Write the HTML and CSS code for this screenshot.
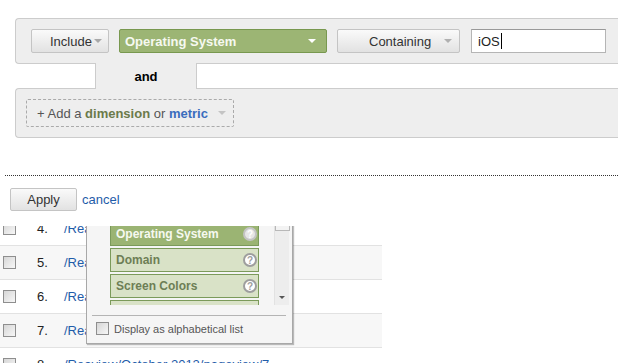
FILE: index.html
```html
<!doctype html>
<html lang="en">
    <head>
        <meta charset="UTF-8">
        <title>Advanced segment</title>
        <link rel="stylesheet" href="styles.css">
    </head>
    <body>
        <div class="filter">
            <div class="panel panel--condition">
                <div class="btn btn--include">Include<span class="arrow"></span></div>
                <div class="select">Operating System<span class="arrow arrow--white"></span></div>
                <div class="btn btn--match">Containing<span class="arrow arrow--grey"></span></div>
                <div class="field">iOS<span class="caret"></span></div>
            </div>
            <div class="joiner">and</div>
            <div class="panel panel--add">
                <div class="add-dim">
                    + Add a&nbsp;<b class="add-dim__dim">dimension</b>&nbsp;or&nbsp;<b class="add-dim__metric">metric</b>
                    <span class="arrow arrow--light"></span>
                </div>
            </div>
        </div>

        <div class="rule"></div>

        <div class="actions">
            <button class="btn btn--apply">Apply</button>
            <a class="cancel">cancel</a>
        </div>

        <div class="results">
            <div class="rows">
                <div class="row"><span class="check"></span><span class="row__num">4.</span><a class="row__link">/Reaview/October 2012/pageview/4</a></div>
                <div class="row row--alt"><span class="check"></span><span class="row__num">5.</span><a class="row__link">/Reaview/October 2012/pageview/5</a></div>
                <div class="row"><span class="check"></span><span class="row__num">6.</span><a class="row__link">/Reaview/October 2012/pageview/6</a></div>
                <div class="row row--alt"><span class="check"></span><span class="row__num">7.</span><a class="row__link">/Reaview/October 2012/pageview/7</a></div>
                <div class="row"><span class="check"></span><span class="row__num">8.</span><a class="row__link">/Reaview/October 2012/pageview/7</a></div>
            </div>

            <!-- dimension picker, opened over the table -->
            <div class="picker">
                <div class="picker__list">
                    <div class="picker__items">
                        <div class="opt opt--on">Operating System<span class="help">?</span></div>
                        <div class="opt">Domain<span class="help">?</span></div>
                        <div class="opt">Screen Colors<span class="help">?</span></div>
                        <div class="opt">Screen Resolution<span class="help">?</span></div>
                    </div>
                    <div class="scroll">
                        <div class="scroll__thumb"></div>
                        <span class="scroll__down"></span>
                    </div>
                </div>
                <div class="picker__rule"></div>
                <div class="picker__foot"><span class="check"></span>Display as alphabetical list</div>
            </div>
        </div>
    </body>
</html>
```

FILE: styles.css
```css
/* base */
* {
    box-sizing: border-box;
}

body {
    margin: 0;
    overflow: hidden;
    font-family: "Liberation Sans", Arial, sans-serif;
    font-size: 13px;
    color: #333;
    background-color: #fff;
}

/* filter panels */
.filter {
    padding: 18px 0 0 15px;
}

.panel {
    display: flex;
    align-items: center;
    background-color: #eee;
    border: 1px solid #ccc;
    border-right: 0;
    border-radius: 4px 0 0 4px;
}

.panel--condition {
    gap: 10px;
    padding: 10px 0 10px 15px;
}

.panel--add {
    padding: 10px 0 10px 10px;
}

.joiner {
    position: relative;
    z-index: 1;
    display: flex;
    align-items: center;
    justify-content: center;
    width: 102px;
    height: 26px;
    margin: -1px 0 -1px 80px;
    background-color: #eee;
    border-left: 1px solid #ccc;
    border-right: 1px solid #ccc;
    font-weight: bold;
    color: #000;
}

/* buttons */
.btn {
    display: flex;
    align-items: center;
    height: 24px;
    border: 1px solid #c4c4c4;
    border-radius: 2px;
    background: linear-gradient(#fafafa, #e2e2e2);
    color: #333;
    font: inherit;
}

.btn--include {
    width: 78px;
    padding-left: 18px;
}

.btn--match {
    width: 123px;
    padding-left: 31px;
}

.btn--match .arrow {
    margin-left: 13px;
}

.select {
    display: flex;
    align-items: center;
    justify-content: space-between;
    width: 208px;
    height: 24px;
    padding: 0 10px 0 5px;
    background-color: #9cb574;
    border: 1px solid #78984f;
    border-radius: 2px;
    color: #f6f9f0;
    font-weight: bold;
}

.field {
    display: flex;
    align-items: center;
    width: 135px;
    height: 24px;
    margin-left: 1px;
    padding-left: 6px;
    background-color: #fff;
    border: 1px solid #b5b5b5;
    border-top-color: #999;
    color: #222;
}

.caret {
    width: 1px;
    height: 16px;
    margin-left: 1px;
    background-color: #000;
}

.arrow {
    width: 0;
    height: 0;
    margin-left: 2px;
    border-left: 4px solid transparent;
    border-right: 4px solid transparent;
    border-top: 4px solid #a8a8a8;
}

.arrow--white {
    border-top-color: #fff;
}

.arrow--grey {
    border-top-color: #b0b0b0;
}

.arrow--light {
    margin-left: 10px;
    border-top-color: #c4c4c4;
}

.add-dim {
    display: flex;
    align-items: center;
    width: 208px;
    height: 28px;
    padding-left: 10px;
    border: 1px dashed #aaa;
    border-radius: 2px;
    color: #555;
}

.add-dim__dim {
    color: #6b7a4a;
}

.add-dim__metric {
    color: #3a6cbd;
}

/* apply row */
.rule {
    margin: 37px 0 0 5px;
    border-top: 1px dotted #333;
}

.actions {
    display: flex;
    align-items: center;
    gap: 5px;
    padding: 12px 0 0 10px;
}

.btn--apply {
    justify-content: center;
    width: 67px;
    height: 23px;
    padding: 0;
}

.cancel {
    color: #1f5ca9;
}

/* results table */
.results {
    position: relative;
    height: 137px;
    margin-top: 15px;
    overflow: hidden;
}

.rows {
    margin-top: -14px;
}

.row {
    display: flex;
    align-items: center;
    width: 382px;
    height: 34px;
    border-bottom: 1px solid #e2e2e2;
}

.row--alt {
    background-color: #f7f7f7;
}

.row .check {
    margin-left: 3px;
}

.row__num {
    width: 27px;
    margin-left: 21px;
    color: #222;
}

.row__link {
    color: #1f5ca9;
}

.check {
    flex: none;
    width: 13px;
    height: 13px;
    border: 1px solid #8e8e8e;
    background: linear-gradient(135deg, #d6d6d6, #f7f7f7);
}

/* dimension picker */
.picker {
    position: absolute;
    top: -30px;
    left: 86px;
    width: 207px;
    height: 148px;
    background-color: #f5f5f5;
    border: 1px solid #a8a8a8;
    box-shadow: 1px 1px 1px rgb(0 0 0 / 25%);
}

.picker__list {
    display: flex;
    height: 108px;
    padding-left: 23px;
    overflow: hidden;
}

.picker__items {
    display: flex;
    flex-direction: column;
    gap: 2px;
    width: 149px;
    padding-top: 25px;
}

.opt {
    display: flex;
    flex: none;
    align-items: center;
    justify-content: space-between;
    height: 24px;
    padding: 0 1px 0 5px;
    background-color: #d9e2c7;
    border: 1px solid #7b9a5a;
    color: #6d7e55;
    font-size: 12px;
    font-weight: bold;
}

.opt--on {
    background-color: #9bb473;
    color: #f6f9f0;
}

.help {
    display: flex;
    align-items: center;
    justify-content: center;
    width: 14px;
    height: 14px;
    border: 2px solid #9e9e9e;
    border-radius: 50%;
    background-color: #fff;
    color: #9e9e9e;
    font-size: 10px;
    font-weight: bold;
}

.opt--on .help {
    background-color: #e6e6e6;
    color: #fff;
    border-color: #c4c4c4;
}

.scroll {
    display: flex;
    flex-direction: column;
    align-items: center;
    width: 15px;
    margin-left: 15px;
    background-color: #ededed;
    border-left: 1px solid #e2e2e2;
}

.scroll__thumb {
    width: 15px;
    height: 34px;
    background-color: #f3f3f3;
    border: 1px solid #b8b8b8;
    border-top: 0;
}

.scroll__down {
    margin-top: auto;
    margin-bottom: 6px;
    border-left: 3px solid transparent;
    border-right: 3px solid transparent;
    border-top: 3px solid #555;
}

.picker__rule {
    margin: 10px 6px 0 5px;
    border-top: 1px solid #b4b4b4;
}

.picker__foot {
    display: flex;
    align-items: center;
    gap: 5px;
    padding: 6px 0 0 9px;
    font-size: 11px;
    color: #555;
}
```
